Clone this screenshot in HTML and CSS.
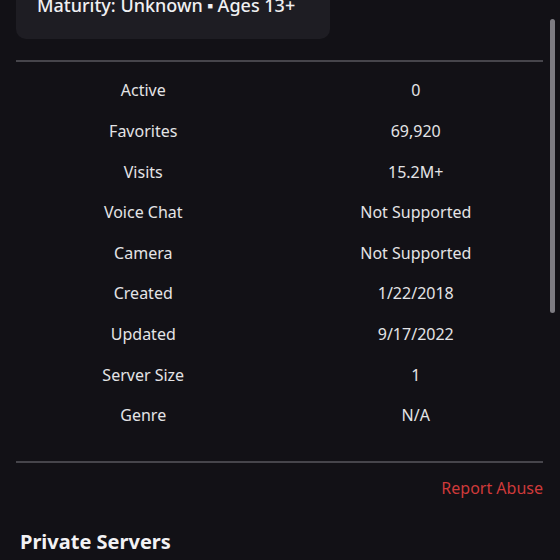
FILE: index.html
```html
<!DOCTYPE html>
<html>
<head>
<meta charset="utf-8">
<link rel="stylesheet" href="styles.css">
</head>
<body>
<div class="page">
  <div class="card">
    <div class="maturity">Maturity: Unknown <span class="sq">■</span> Ages 13+</div>
  </div>
  <div class="divider top-div"></div>
  <div class="stats">
    <div class="row"><span>Active</span><span>0</span></div>
    <div class="row"><span>Favorites</span><span>69,920</span></div>
    <div class="row"><span>Visits</span><span>15.2M+</span></div>
    <div class="row"><span>Voice Chat</span><span>Not Supported</span></div>
    <div class="row"><span>Camera</span><span>Not Supported</span></div>
    <div class="row"><span>Created</span><span>1/22/2018</span></div>
    <div class="row"><span>Updated</span><span>9/17/2022</span></div>
    <div class="row"><span>Server Size</span><span>1</span></div>
    <div class="row"><span>Genre</span><span>N/A</span></div>
  </div>
  <div class="divider"></div>
  <div class="report"><a>Report Abuse</a></div>
  <h2 class="section">Private Servers</h2>
</div>
<div class="scrollbar"></div>
</body>
</html>
```

FILE: styles.css
```css
html, body {
  margin: 0;
  padding: 0;
  background: #121116;
  height: 560px;
  overflow: hidden;
}
body {
  font-family: "Noto Sans", "Open Sans", sans-serif;
  color: #e4e4e6;
  position: relative;
}
.page {
  padding: 0 17px 0 16px;
}
.card {
  width: 314px;
  margin-top: -30px;
  height: 69px;
  box-sizing: border-box;
  padding: 23px 0 0 21px;
  background: #1e1d23;
  border-radius: 10px;
}
.maturity {
  font-size: 18px;
  font-weight: 500;
  line-height: 24px;
  color: #f0f0f2;
}
.sq {
  font-size: 9px;
  vertical-align: 3px;
}
.divider {
  height: 2px;
  background: #46454b;
}
.top-div {
  margin-top: 21px;
}
.stats {
  margin: 0 -9px 0 -9px;
  padding: 8px 0 25px;
}
.row {
  display: grid;
  grid-template-columns: 1fr 1fr;
  height: 40.625px;
  align-items: center;
  font-size: 16px;
  text-align: center;
}
.report {
  display: flex;
  justify-content: flex-end;
  padding-top: 14px;
}
.report a {
  color: #cf3a3a;
  font-size: 16px;
  line-height: 22px;
}
.section {
  margin: 30px 0 0 4px;
  font-size: 20px;
  font-weight: 700;
  color: #f2f2f4;
  line-height: 26px;
}
.scrollbar {
  position: absolute;
  right: 5px;
  top: 19px;
  width: 5px;
  height: 294px;
  border-radius: 3px;
  background: #7d7c82;
}
```
